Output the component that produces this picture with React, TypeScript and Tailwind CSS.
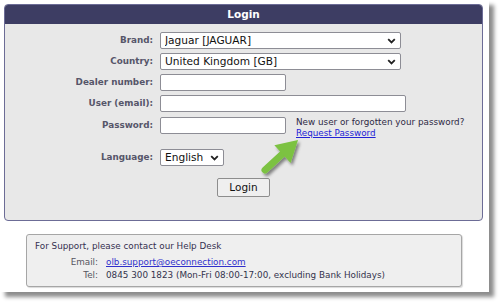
import React from "react";

function Chevron() {
  return (
    <svg
      className="absolute right-[5px] top-[6px] pointer-events-none"
      width="9"
      height="6"
      viewBox="0 0 9 6"
    >
      <path d="M1.2 1.2 L4.5 4.5 L7.8 1.2" fill="none" stroke="#222" strokeWidth="1.8" />
    </svg>
  );
}

function FakeSelect({ value, width }: { value: string; width: string }) {
  return (
    <div className={`relative ml-[7px] h-[17px] flex shrink-0 ${width}`}>
      <select
        defaultValue={value}
        className="block appearance-none w-full h-[17px] bg-white border border-[#8d8d95] rounded-[2px] pl-[4px] pr-[16px] py-0 text-[10.6px] leading-[15px] text-[#111] font-['DejaVu_Sans',Verdana,sans-serif] outline-none"
      >
        <option>{value}</option>
      </select>
      <Chevron />
    </div>
  );
}

function Label({ children }: { children: React.ReactNode }) {
  return (
    <div className="w-[148px] text-right font-bold text-[8.8px] leading-[11px] text-[#56566a] shrink-0">{children}</div>
  );
}

export default function App() {
  return (
    <div className="w-[502px] h-[305px] bg-white overflow-hidden font-['DejaVu_Sans',Verdana,sans-serif]">
      <div className="relative w-[489px] h-[292px] bg-white shadow-[5px_5px_4px_rgba(0,0,0,0.45)] pt-[4px] pl-[4px]">
        {/* Login panel */}
        <div className="w-[479px] h-[217px] border border-[#6c6c96] rounded-[4px] bg-[#e8e8e8] overflow-hidden flex flex-col">
          <div className="h-[19px] bg-[#3d3d63] text-white font-bold text-[10.5px] flex items-center justify-center shrink-0">
            Login
          </div>

          <div className="flex items-center h-[17px] mt-[8px]">
            <Label>Brand:</Label>
            <FakeSelect value="Jaguar [JAGUAR]" width="w-[241px]" />
          </div>

          <div className="flex items-center h-[17px] mt-[4px]">
            <Label>Country:</Label>
            <FakeSelect value="United Kingdom [GB]" width="w-[241px]" />
          </div>

          <div className="flex items-center h-[17px] mt-[4px]">
            <Label>Dealer number:</Label>
            <input className="ml-[7px] w-[126px] h-[17px] bg-white border border-[#8d8d95] rounded-[2px] outline-none" />
          </div>

          <div className="flex items-center h-[17px] mt-[4px]">
            <Label>User (email):</Label>
            <input className="ml-[7px] w-[246px] h-[17px] bg-white border border-[#8d8d95] rounded-[2px] outline-none" />
          </div>

          <div className="flex items-start mt-[5px]">
            <div className="h-[17px] flex items-center">
              <Label>Password:</Label>
            </div>
            <input
              type="password"
              className="ml-[7px] w-[126px] h-[17px] bg-white border border-[#8d8d95] rounded-[2px] outline-none"
            />
            <div className="ml-[10px] text-[8.8px] leading-[11px] text-[#2e2a45]">
              <div>New user or forgotten your password?</div>
              <a href="#" className="text-[#2323d6] underline">
                Request Password
              </a>
            </div>
          </div>

          <div className="flex items-center h-[17px] mt-[10px]">
            <Label>Language:</Label>
            <FakeSelect value="English" width="w-[64px]" />
          </div>

          <div className="flex justify-center mt-[12px]">
            <button className="w-[53px] h-[19px] bg-[#efefef] border border-[#8d8d8d] rounded-[2px] text-[10.5px] text-[#111] leading-none">
              Login
            </button>
          </div>
        </div>

        {/* Support box */}
        <div className="mt-[13px] ml-[22px] w-[436px] h-[53px] border border-[#a6a6a6] rounded-[3px] bg-[#efefef] shadow-[1px_1px_1px_rgba(0,0,0,0.15)] pl-[8px] pt-[5px] text-[8.8px]">
          <div className="leading-[13px] text-[#35304f]">For Support, please contact our Help Desk</div>
          <div className="mt-[3px] grid grid-cols-[63px_1fr] gap-x-[8px] leading-[12.5px]">
            <div className="text-right text-[#555560]">Email:</div>
            <a href="#" className="text-[#3030cc] underline">
              olb.support@oeconnection.com
            </a>
            <div className="text-right text-[#555560]">Tel:</div>
            <div className="text-[#33334d]">0845 300 1823 (Mon-Fri 08:00-17:00, excluding Bank Holidays)</div>
          </div>
        </div>

        {/* Green arrow annotation */}
        <svg className="absolute left-0 top-0 pointer-events-none" width="489" height="292" viewBox="0 0 489 292">
          <defs>
            <filter id="ash" x="-50%" y="-50%" width="200%" height="200%">
              <feDropShadow dx="2" dy="2.5" stdDeviation="1.6" floodColor="#000" floodOpacity="0.45" />
            </filter>
          </defs>
          <g filter="url(#ash)">
            <line x1="265" y1="170" x2="284" y2="152.5" stroke="#7cc242" strokeWidth="7" strokeLinecap="round" />
            <polygon points="298,140 290.6,163.1 274.4,145.3" fill="#7cc242" />
          </g>
        </svg>
      </div>
    </div>
  );
}
